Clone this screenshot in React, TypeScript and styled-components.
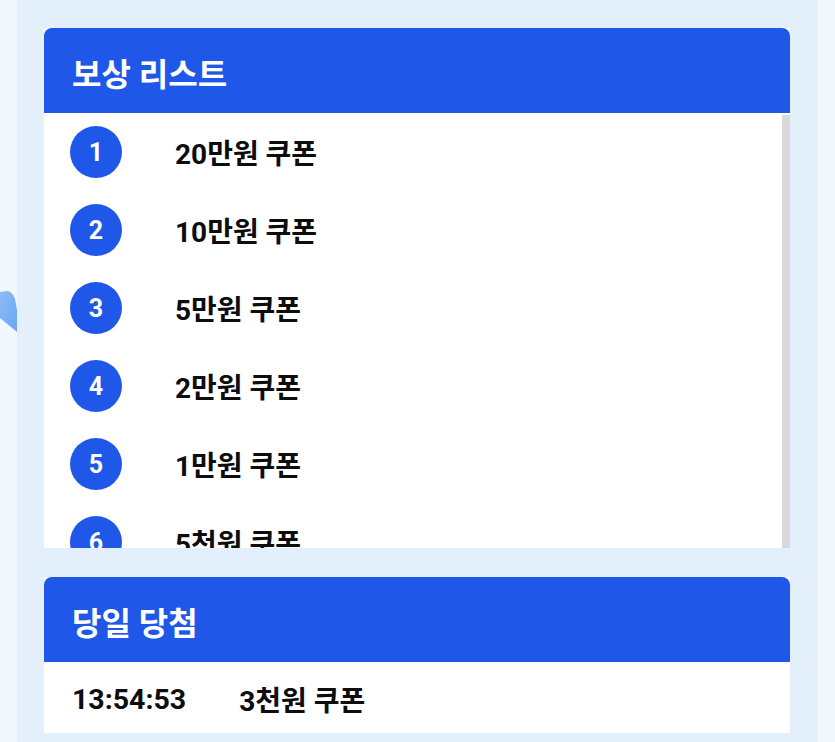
import styled, { createGlobalStyle } from "styled-components";

const GlobalStyle = createGlobalStyle`
  html, body {
    margin: 0;
    padding: 0;
    background: #f2f7fd;
  }
  body {
    font-family: Roboto, "Noto Sans CJK KR", "Noto Sans", sans-serif;
  }
`;

const Page = styled.div`
  position: relative;
  width: 835px;
  height: 742px;
  overflow: hidden;
  background: #f2f7fd;
  display: flex;
`;

const Blob = styled.svg`
  position: absolute;
  left: 0;
  top: 280px;
  width: 17px;
  height: 64px;
`;

const Column = styled.div`
  margin-left: 17px;
  width: 801px;
  height: 100%;
  background: #e3effb;
  padding: 28px 28px 0 27px;
  box-sizing: border-box;
  display: flex;
  flex-direction: column;
  gap: 29px;
`;

const Card = styled.section`
  display: flex;
  flex-direction: column;
  background: #ffffff;
`;

const CardHeader = styled.header`
  height: 85px;
  display: flex;
  align-items: center;
  padding: 3px 0 0 28px;
  box-sizing: border-box;
  background: #1f58e8;
  border-radius: 8px 8px 0 0;
`;

const Title = styled.h2`
  margin: 0;
  color: #ffffff;
  font-size: 32px;
  font-weight: 700;
`;

const ListFrame = styled.div`
  display: flex;
  height: 435px;
`;

const List = styled.ol`
  flex: 1;
  list-style: none;
  margin: 0;
  padding: 0;
  overflow: hidden;
`;

const ScrollTrack = styled.div`
  width: 8px;
  margin-top: 2px;
  background: #d9d9d9;
`;

const Item = styled.li`
  height: 78px;
  display: flex;
  align-items: center;
  padding-left: 26px;
  gap: 53px;
`;

const Badge = styled.span`
  width: 52px;
  height: 52px;
  border-radius: 50%;
  background: #1f58e8;
  color: #ffffff;
  display: flex;
  align-items: center;
  justify-content: center;
  font-size: 25px;
  font-weight: 700;
  flex-shrink: 0;
`;

const Prize = styled.span`
  color: #0d0d0d;
  font-size: 28px;
  font-weight: 700;
`;

const WinRow = styled.div`
  height: 71px;
  display: flex;
  align-items: center;
  padding: 3px 0 0 28px;
  box-sizing: border-box;
  gap: 53px;
`;

const Time = styled.span`
  color: #0d0d0d;
  font-size: 28.5px;
  font-weight: 700;
`;

const rewards = [
  "20만원 쿠폰",
  "10만원 쿠폰",
  "5만원 쿠폰",
  "2만원 쿠폰",
  "1만원 쿠폰",
  "5천원 쿠폰",
];

export default function App() {
  return (
    <>
      <GlobalStyle />
      <Page>
        <Blob viewBox="0 0 17 64">
          <defs>
            <linearGradient id="blobFill" x1="0" y1="0" x2="1" y2="1">
              <stop offset="0" stopColor="#8fbcf7" />
              <stop offset="1" stopColor="#6aa5f4" />
            </linearGradient>
          </defs>
          <path d="M0 12 L7 11 Q12 11 15 19 L17 30 L17 52 L0 38 Z" fill="url(#blobFill)" />
        </Blob>
        <Column>
          <Card>
            <CardHeader>
              <Title>보상 리스트</Title>
            </CardHeader>
            <ListFrame>
              <List>
                {rewards.map((r, i) => (
                  <Item key={r}>
                    <Badge>{i + 1}</Badge>
                    <Prize>{r}</Prize>
                  </Item>
                ))}
              </List>
              <ScrollTrack />
            </ListFrame>
          </Card>
          <Card>
            <CardHeader>
              <Title>당일 당첨</Title>
            </CardHeader>
            <WinRow>
              <Time>13:54:53</Time>
              <Prize>3천원 쿠폰</Prize>
            </WinRow>
          </Card>
        </Column>
      </Page>
    </>
  );
}
